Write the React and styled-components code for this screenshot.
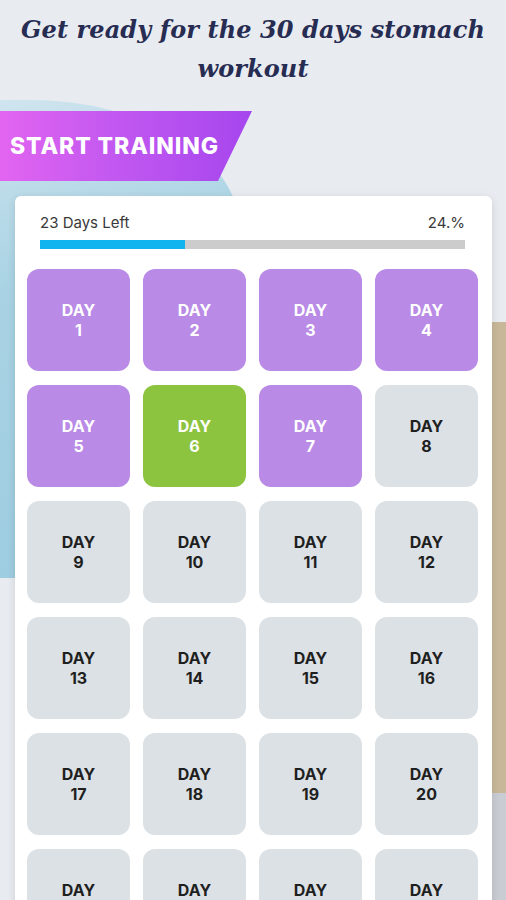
import React from 'react'
import styled, { createGlobalStyle } from 'styled-components'

const GlobalStyle = createGlobalStyle`
  html, body {
    margin: 0;
    padding: 0;
    background: #e8ebf0;
  }
  * { box-sizing: border-box; }
`

const Page = styled.div`
  position: relative;
  width: 506px;
  height: 900px;
  overflow: hidden;
  background: #e8ebf0;
  font-family: Inter, "Open Sans", sans-serif;
`

// decorative shapes sitting behind the card
const BlueBlob = styled.div`
  position: absolute;
  left: 0;
  top: 100px;
  width: 240px;
  height: 478px;
  border-top-right-radius: 210px 130px;
  background: linear-gradient(165deg, #cfe4ee 0%, #a9d3e4 35%, #9ccbe0 100%);
`
const TanStrip = styled.div`
  position: absolute;
  right: 0;
  top: 322px;
  width: 60px;
  height: 471px;
  background: #c8b899;
`
const GreyStrip = styled.div`
  position: absolute;
  right: 0;
  top: 793px;
  width: 60px;
  height: 120px;
  background: #c9cdd3;
`

const Content = styled.div`
  position: relative;
  padding-top: 10px;
`

const Title = styled.h1`
  margin: 0;
  font-family: "DejaVu Serif", serif;
  font-style: italic;
  font-weight: 700;
  font-size: 24px;
  line-height: 39px;
  text-align: center;
  color: #272c52;
  letter-spacing: 0.1px;
`

const Banner = styled.div`
  margin-top: 23px;
  width: 252px;
  height: 70px;
  display: flex;
  align-items: center;
  padding-left: 10px;
  clip-path: polygon(0 0, 252px 0, 218px 70px, 0 70px);
  background: linear-gradient(90deg, #e265f0 0%, #c258f0 45%, #a646ee 100%);
  color: #fff;
  font-weight: 800;
  font-size: 23px;
  letter-spacing: 0.9px;
`

const Card = styled.div`
  margin: 15px 14px 0 15px;
  background: #fff;
  border-radius: 6px;
  padding: 18px 14px 20px 12px;
  box-shadow: 0 2px 8px rgba(0, 0, 0, 0.12);
`

const Progress = styled.div`
  padding: 0 13px 0 13px;
`
const ProgressLabels = styled.div`
  display: flex;
  justify-content: space-between;
  font-size: 15px;
  line-height: 18px;
  color: #3a3a3a;
`
const Track = styled.div`
  margin-top: 8px;
  height: 9px;
  background: #cccccc;
`
const Fill = styled.div`
  height: 100%;
  background: #11b4ee;
`

const Grid = styled.div`
  margin-top: 20px;
  display: grid;
  grid-template-columns: repeat(4, 103px);
  grid-auto-rows: 102px;
  column-gap: 13px;
  row-gap: 14px;
`

const tileColors = {
  done: { bg: '#b98ae6', fg: '#ffffff' },
  today: { bg: '#8cc33f', fg: '#ffffff' },
  todo: { bg: '#dbe1e4', fg: '#1f1f1f' },
}

const Tile = styled.div`
  border-radius: 12px;
  background: ${p => tileColors[p.state].bg};
  color: ${p => tileColors[p.state].fg};
  display: flex;
  flex-direction: column;
  align-items: center;
  justify-content: center;
  font-weight: 700;
  font-size: 16px;
  line-height: 20px;
  text-align: center;
`

const days = Array.from({ length: 24 }, (_, i) => i + 1)

const dayState = d => (d === 6 ? 'today' : d < 8 ? 'done' : 'todo')

const progress = 34

const App = () => (
  <Page>
    <GlobalStyle />
    <BlueBlob />
    <TanStrip />
    <GreyStrip />
    <Content>
      <Title>
        Get ready for the 30 days stomach
        <br />
        workout
      </Title>
      <Banner>START TRAINING</Banner>
      <Card>
        <Progress>
          <ProgressLabels>
            <span>23 Days Left</span>
            <span>24.%</span>
          </ProgressLabels>
          <Track>
            <Fill style={{ width: `${progress}%` }} />
          </Track>
        </Progress>
        <Grid>
          {days.map(d => (
            <Tile key={d} state={dayState(d)}>
              <span>DAY</span>
              <span>{d}</span>
            </Tile>
          ))}
        </Grid>
      </Card>
    </Content>
  </Page>
)

export default App
